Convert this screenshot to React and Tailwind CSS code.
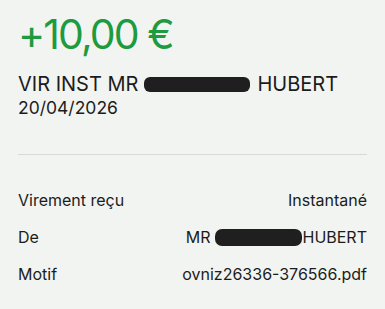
import React from "react";

const rows = [
  { label: "Virement reçu", value: "Instantané" },
  { label: "De", value: "HUBERT", redacted: true },
  { label: "Motif", value: "ovniz26336-376566.pdf" },
];

export default function App() {
  return (
    <div className="w-[385px] h-[309px] bg-[#f2f4f1] px-[18px] pt-[10px] font-['Inter',sans-serif] text-[#1c1c1c] overflow-hidden">
      <div className="text-[41px] leading-[48px] text-[#1e9a3f] tracking-[-1.9px]">+10,00 €</div>

      <div className="mt-[14px] flex items-center text-[20px] leading-[24px]">
        <span>VIR INST MR</span>
        <span className="ml-[6px] mr-[7px] w-[106px] h-[15px] rounded-[6px] bg-[#1f1f1f]" />
        <span>HUBERT</span>
      </div>
      <div className="text-[17.5px] leading-[21px] mt-[1px]">20/04/2026</div>

      <div className="mt-[36px] border-t border-[#d5dad5]" />

      <div className="mt-[35px] flex flex-col gap-[17px] text-[16px] leading-[20px]">
        {rows.map((row) => (
          <div key={row.label} className="flex items-center justify-between">
            <span>{row.label}</span>
            {row.redacted ? (
              <span className="flex items-center">
                <span>MR</span>
                <span className="ml-[5px] w-[87px] h-[17px] rounded-[7px] bg-[#1f1f1f]" />
                <span>HUBERT</span>
              </span>
            ) : (
              <span>{row.value}</span>
            )}
          </div>
        ))}
      </div>
    </div>
  );
}
